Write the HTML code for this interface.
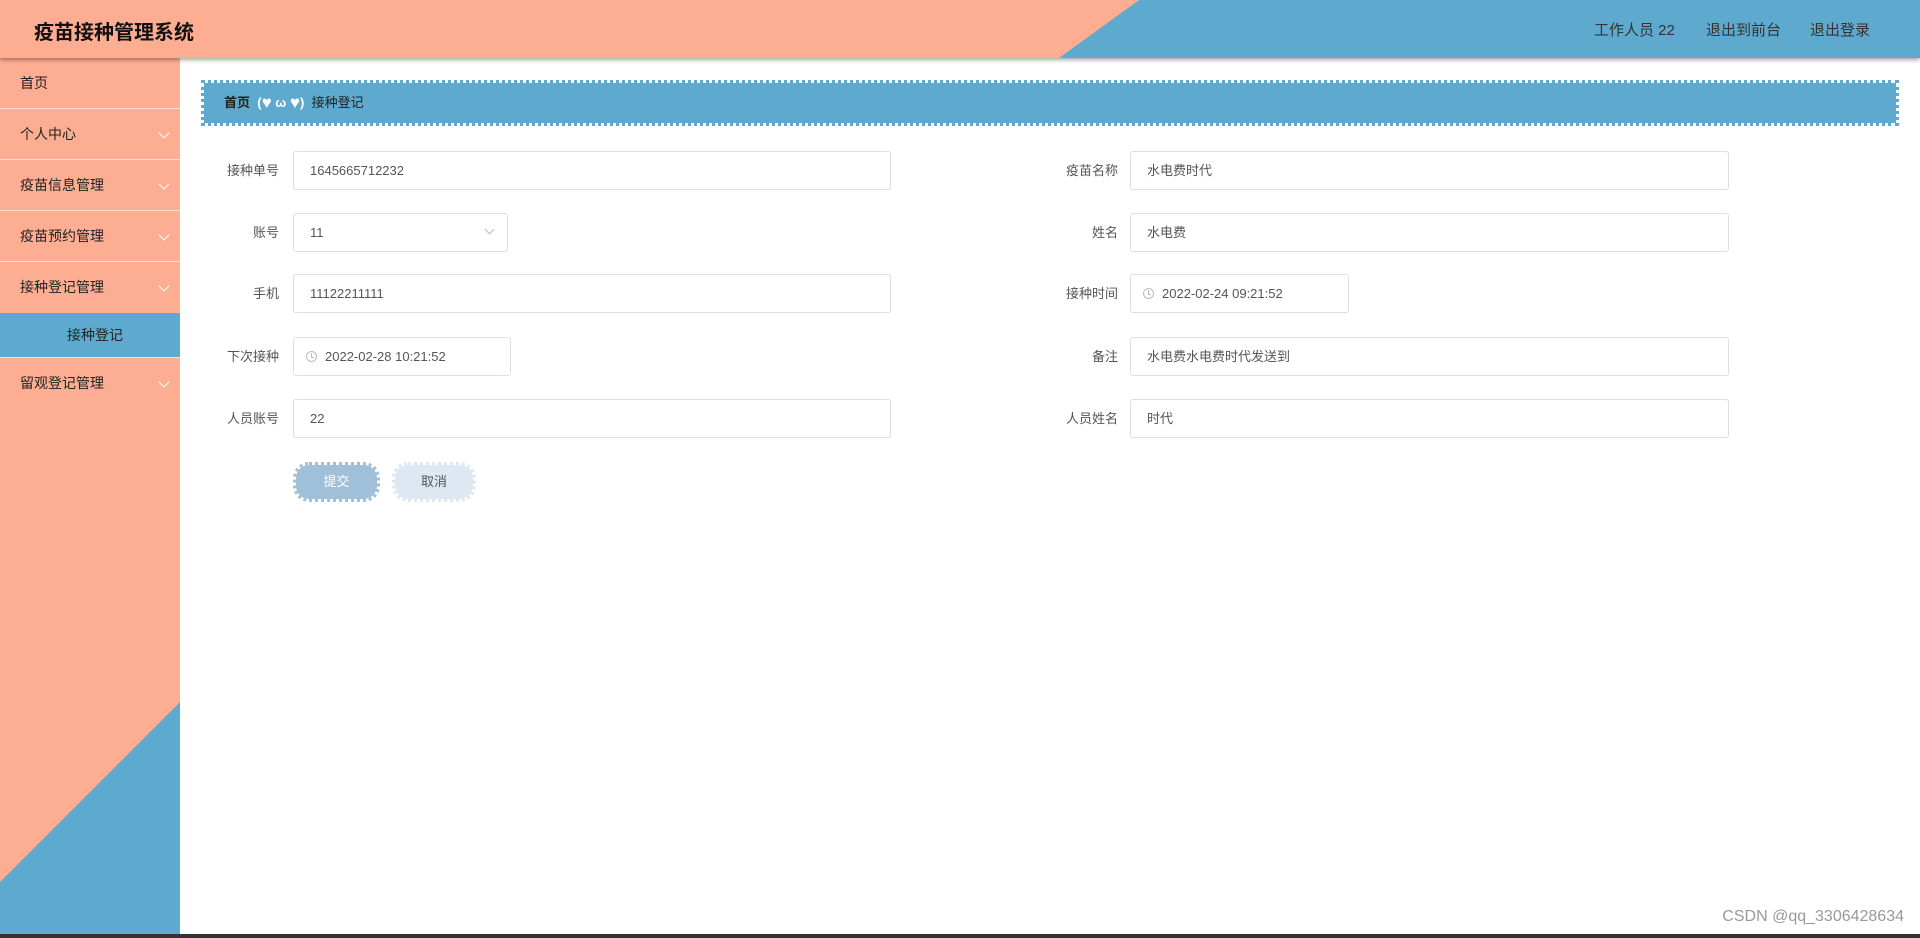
<!DOCTYPE html>
<html><head><meta charset="utf-8">
<style>
*{margin:0;padding:0;box-sizing:border-box}
body{width:1920px;height:938px;overflow:hidden;background:#fff;font-family:"Liberation Sans","Noto Sans CJK SC",sans-serif;position:relative}
.hdr{position:absolute;left:0;top:0;width:1920px;height:58px;background:#fdae92;box-shadow:0 2px 4px rgba(0,0,0,.35);z-index:3;overflow:hidden}
.hdr .tri{position:absolute;left:0;top:0}
.title{position:absolute;left:34px;top:16px;font-size:20px;font-weight:bold;color:#111}
.hr{position:absolute;top:19px;font-size:15px;color:#333}
.side{position:absolute;left:0;top:58px;width:180px;height:880px;background:#fdae92;overflow:hidden}
.side svg{position:absolute;left:0;top:0}
.mi{position:relative;height:51px;border-bottom:1px solid #fde0d4;font-size:14px;color:#222;padding-left:20px;line-height:50px}
.mi .ar{position:absolute;right:12px;top:20px;width:8px;height:8px;border-right:1px solid #fff;border-bottom:1px solid #fff;transform:rotate(45deg)}
.sub{height:44px;background:#5eaacf;text-align:center;line-height:44px;font-size:14px;color:#222;padding-left:10px;position:relative}
.bc{position:absolute;left:201px;top:80px;width:1698px;height:46px;background:#5eaacf;background-clip:padding-box;border:3px dotted #5eaacf;font-size:13px;color:#222;line-height:40px;padding-left:20px}
.lab{position:absolute;font-size:13px;color:#555;text-align:right;width:100px;line-height:39px}
.inp{position:absolute;height:39px;border:1px solid #dcdfe6;border-radius:3px;font-size:13px;color:#555;line-height:37px;padding-left:16px}
.clk{display:inline-block;width:11px;height:11px;border:1px solid #bbb;border-radius:50%;vertical-align:-1px;margin-right:8px;position:relative}
.clk:after{content:"";position:absolute;left:4px;top:1px;width:2px;height:4px;border-left:1px solid #bbb;border-bottom:1px solid #bbb}
.btn{position:absolute;top:462px;height:40px;border:3px dotted;border-radius:16px;font-size:13px;text-align:center;line-height:34px;background-clip:padding-box}
.wm{position:absolute;right:16px;top:908px;font-size:16px;color:#999}
.ht{font-size:17px;vertical-align:-1px}
</style></head><body>
<div class="hdr">
<svg class="tri" width="1920" height="58"><polygon points="1139,0 1920,0 1920,58 1059,58" fill="#5eaacf"/></svg>
<div class="title">疫苗接种管理系统</div>
<div class="hr" style="left:1594px">工作人员 22</div>
<div class="hr" style="left:1706px">退出到前台</div>
<div class="hr" style="left:1810px">退出登录</div>
</div>
<div class="side">
<svg width="180" height="880"><polygon points="180,644 180,880 0,880 0,824" fill="#5eaacf"/></svg>
<div class="mi">首页</div>
<div class="mi">个人中心<span class="ar"></span></div>
<div class="mi">疫苗信息管理<span class="ar"></span></div>
<div class="mi">疫苗预约管理<span class="ar"></span></div>
<div class="mi" style="border-bottom:0">接种登记管理<span class="ar"></span></div>
<div class="sub">接种登记</div>
<div class="mi" style="border-top:1px solid #fde0d4;border-bottom:0">留观登记管理<span class="ar"></span></div>
</div>
<div style="position:absolute;left:0;top:934px;width:1920px;height:4px;background:#333"></div>
<div class="bc"><b>首页</b> &nbsp;<b style="color:#fff">(<span class="ht">♥</span> ω <span class="ht">♥</span>)</b>&nbsp; 接种登记</div>

<div class="lab" style="left:179px;top:151px">接种单号</div>
<div class="inp" style="left:293px;top:151px;width:598px">1645665712232</div>
<div class="lab" style="left:1018px;top:151px">疫苗名称</div>
<div class="inp" style="left:1130px;top:151px;width:599px">水电费时代</div>

<div class="lab" style="left:179px;top:213px">账号</div>
<div class="inp" style="left:293px;top:213px;width:215px">11<span style="position:absolute;right:14px;top:12px;width:7px;height:7px;border-right:1px solid #bbb;border-bottom:1px solid #bbb;transform:rotate(45deg)"></span></div>
<div class="lab" style="left:1018px;top:213px">姓名</div>
<div class="inp" style="left:1130px;top:213px;width:599px">水电费</div>

<div class="lab" style="left:179px;top:274px">手机</div>
<div class="inp" style="left:293px;top:274px;width:598px">11122211111</div>
<div class="lab" style="left:1018px;top:274px">接种时间</div>
<div class="inp" style="left:1130px;top:274px;width:219px;padding-left:12px"><span class="clk"></span>2022-02-24 09:21:52</div>

<div class="lab" style="left:179px;top:337px">下次接种</div>
<div class="inp" style="left:293px;top:337px;width:218px;padding-left:12px"><span class="clk"></span>2022-02-28 10:21:52</div>
<div class="lab" style="left:1018px;top:337px">备注</div>
<div class="inp" style="left:1130px;top:337px;width:599px">水电费水电费时代发送到</div>

<div class="lab" style="left:179px;top:399px">人员账号</div>
<div class="inp" style="left:293px;top:399px;width:598px">22</div>
<div class="lab" style="left:1018px;top:399px">人员姓名</div>
<div class="inp" style="left:1130px;top:399px;width:599px">时代</div>

<div class="btn" style="left:293px;width:87px;background-color:#a0bfd8;border-color:#a0bfd8;color:#fff">提交</div>
<div class="btn" style="left:392px;width:84px;background-color:#dde8f3;border-color:#dde8f3;color:#555">取消</div>
<div class="wm">CSDN @qq_3306428634</div>
</body></html>
